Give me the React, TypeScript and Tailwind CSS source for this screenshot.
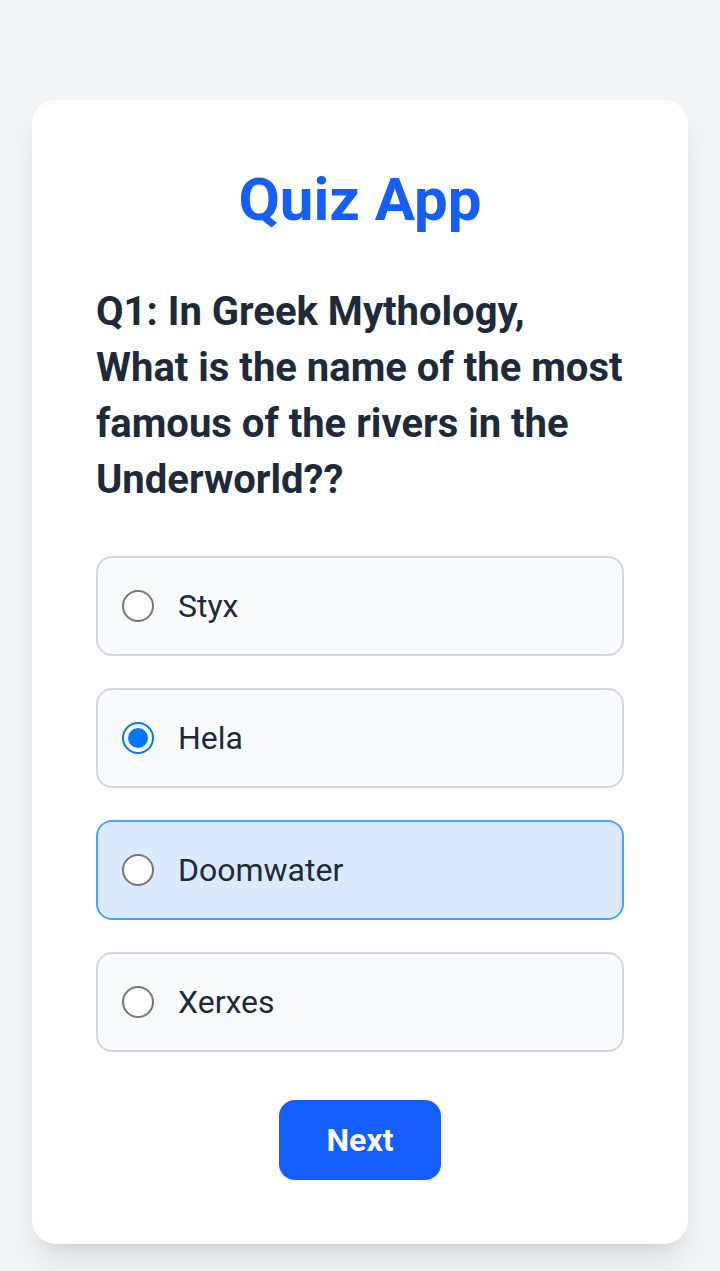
import { useState } from "react";

const options = ["Styx", "Hela", "Doomwater", "Xerxes"];

export default function App() {
  const [selected, setSelected] = useState("Hela");
  const highlighted = "Doomwater";

  return (
    <main className="flex min-h-screen flex-col bg-gray-100 px-8 pt-[100px] pb-[27px] font-[Roboto,sans-serif]">
      <section className="w-full rounded-3xl bg-white p-16 shadow-[0_20px_30px_-6px_rgb(0_0_0/0.1),0_8px_12px_-8px_rgb(0_0_0/0.1)]">
        <h1 className="mb-12 text-center text-[60px] leading-[72px] font-bold text-blue-600">
          Quiz App
        </h1>
        <form onSubmit={(event) => event.preventDefault()}>
          <h2 id="question" className="mb-12 text-[40px] leading-[56px] font-bold text-gray-800">
            Q1: In Greek Mythology, What is the name of the most famous of the rivers in the Underworld??
          </h2>
          <div role="radiogroup" aria-labelledby="question" className="flex flex-col gap-8">
            {options.map((option) => (
              <label
                key={option}
                className={
                  option === highlighted
                    ? "flex cursor-pointer items-center gap-6 rounded-2xl border-2 border-blue-400 bg-blue-100 p-6"
                    : "flex cursor-pointer items-center gap-6 rounded-2xl border-2 border-gray-300 bg-gray-50 p-6"
                }
              >
                <input
                  type="radio"
                  name="answer"
                  value={option}
                  checked={selected === option}
                  onChange={() => setSelected(option)}
                  className="grid size-8 shrink-0 appearance-none place-items-center rounded-full border-2 border-[#767676] bg-white before:size-5 before:rounded-full checked:border-[#0075ff] checked:before:bg-[#0075ff]"
                />
                <span className="text-[32px] leading-[48px] text-gray-800">{option}</span>
              </label>
            ))}
          </div>
          <div className="mt-12 flex justify-center">
            <button type="submit" className="rounded-2xl bg-blue-600 px-12 py-4 text-[32px] leading-[48px] font-bold text-white">
              Next
            </button>
          </div>
        </form>
      </section>
    </main>
  );
}
